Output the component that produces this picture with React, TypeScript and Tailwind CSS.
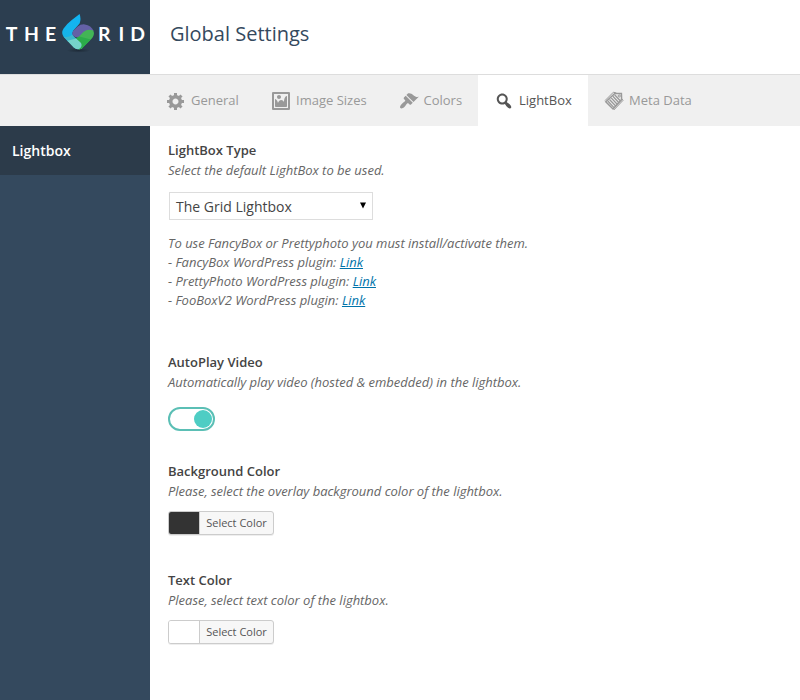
import type { ReactNode } from "react";

const paths = {
  general:
    "M18 12h-2.18c-.17.7-.44 1.35-.81 1.93l1.54 1.54-2.1 2.1-1.54-1.54c-.58.36-1.23.63-1.91.79V19H8v-2.18c-.68-.16-1.33-.43-1.91-.79l-1.54 1.54-2.12-2.12 1.54-1.54c-.36-.58-.63-1.23-.79-1.91H1V9.03h2.17c.16-.7.44-1.35.8-1.94L2.43 5.55l2.1-2.1 1.54 1.54c.58-.37 1.24-.64 1.93-.81V2h3v2.18c.68.16 1.33.43 1.91.79l1.54-1.54 2.12 2.12-1.54 1.54c.36.59.64 1.24.8 1.94H18V12zm-8.5 1.5c1.66 0 3-1.34 3-3s-1.34-3-3-3-3 1.34-3 3 1.34 3 3 3z",
  image:
    "M2.25 1h15.5c.69 0 1.25.56 1.25 1.25v15.5c0 .69-.56 1.25-1.25 1.25H2.25C1.56 19 1 18.44 1 17.75V2.25C1 1.56 1.56 1 2.25 1zM17 17V3H3v14h14zM10 6c0-1.1-.9-2-2-2s-2 .9-2 2 .9 2 2 2 2-.9 2-2zm3 5s0-6 3-6v10c0 .55-.45 1-1 1H5c-.55 0-1-.45-1-1V8c2 0 3 4 3 4s1-3 3-3 3 2 3 2z",
  colors:
    "M14.48 11.06L7.41 3.99l1.5-1.5c.5-.56 2.3-.47 3.51.32 1.21.8 1.43 1.28 2.91 2.1 1.18.64 2.45 1.26 4.45.85zm-.71.71L6.7 4.7 4.93 6.47c-.39.39-.39 1.02 0 1.41l1.06 1.06c.39.39.39 1.03 0 1.42-.6.6-1.43 1.11-2.21 1.69-.35.26-.7.53-1.01.84C1.43 14.23.4 16.08 1.4 17.07c.99 1 2.84-.03 4.18-1.36.31-.31.58-.66.85-1.02.57-.78 1.08-1.61 1.69-2.21.39-.39 1.02-.39 1.41 0l1.06 1.06c.39.39 1.02.39 1.41 0z",
  search:
    "M12.14 4.18c1.87 1.87 2.11 4.75.72 6.89.12.1.22.21.36.31.2.16.47.36.81.59.34.24.56.39.66.47.42.31.73.57.94.78.32.32.6.65.84 1 .25.35.44.69.59 1.04.14.35.21.68.18 1-.02.32-.14.59-.36.81s-.49.34-.81.36c-.31.02-.65-.04-.99-.19-.35-.14-.7-.34-1.04-.59-.35-.24-.68-.52-1-.84-.21-.21-.47-.52-.77-.93-.1-.13-.25-.35-.47-.66-.22-.32-.4-.57-.56-.78-.16-.2-.29-.35-.44-.5-2.07 1.09-4.69.76-6.44-.98-2.14-2.15-2.14-5.64 0-7.78 2.15-2.15 5.63-2.15 7.78 0zm-1.41 6.36c1.36-1.37 1.36-3.58 0-4.95-1.37-1.37-3.59-1.37-4.95 0-1.37 1.37-1.37 3.58 0 4.95 1.36 1.37 3.58 1.37 4.95 0z",
};

function Icon({ d }: { d: string }) {
  return (
    <svg className="size-5 shrink-0" viewBox="0 0 20 20" fill="currentColor">
      <path d={d} />
    </svg>
  );
}

function NotesIcon() {
  return (
    <svg className="size-5 shrink-0" viewBox="0 0 20 20" fill="none" stroke="currentColor">
      <path d="M1 9.6 9.4 1.2 12.4 2" strokeWidth="1" />
      <path d="M1.8 10.8 10.8 2.4 17.4 2.6 17.6 8.6 9 18Z" strokeWidth="1.5" />
      <path d="M9.8 19 19 9.4 18 8" strokeWidth="1" />
      <path d="M3.8 10l6.2 6.6M5.5 8.5l6.2 6.5M7.2 6.9l6 6.4M8.9 5.3l6 6.4M10.6 3.8l5.6 6" strokeWidth="1.3" />
      <circle cx="15.2" cy="5" r="1.1" strokeWidth="1" />
    </svg>
  );
}

function Logo() {
  return (
    <svg className="block h-[74px] w-[150px]" viewBox="0 0 150 74">
      <defs>
        <linearGradient id="sky" x1="0" y1="0" x2="0" y2="1">
          <stop offset="0" stopColor="#10b4f5" />
          <stop offset="1" stopColor="#18b5e6" />
        </linearGradient>
        <radialGradient id="shade">
          <stop offset="0" stopColor="#17222d" stopOpacity=".7" />
          <stop offset="1" stopColor="#17222d" stopOpacity="0" />
        </radialGradient>
      </defs>
      <ellipse cx="78.5" cy="50.5" rx="12" ry="2.2" fill="url(#shade)" />
      <path d="M79.6 14Q81.4 19 79.6 23.4L73.6 30.2Q71.2 33.6 73.8 36.4L68 41.4 64 37.2Q60.6 33.2 63.6 28.6Q66.5 24.2 71.5 20.3Z" fill="url(#sky)" />
      <path d="M63.2 36.2Q67.2 38.6 72.6 34.6L73.8 36.4 82.6 43.6 80 48.6Q77 50.2 73.8 47.4Z" fill="#3db9cd" />
      <path d="M67.4 40.8 76.4 38.4 82.8 43.4 82.2 48.2Q78.2 50.8 73.8 47.4Z" fill="#76d3cb" />
      <path d="M72.8 35.2Q71.4 32.8 74 30L77.4 26.8Q80.6 24 84.8 24.4Q91.2 25.2 93.6 31L86 33.8 80 37.2Q75.6 38.4 72.8 35.2Z" fill="#6461a6" />
      <path d="M78.8 36.8 83.4 32Q88 28.2 93.3 30.6Q95 34.6 91.8 38.6L82.6 47.8Q80.8 49.6 78.6 49.5Q83.2 46.8 81.2 43L76.2 38.3Z" fill="#43b556" />
      <path d="M79.4 36.4 90.8 39.6 82.6 47.8Q80.8 49.6 78.6 49.5Q83.2 46.8 81.2 43L76.2 38.3Z" fill="#2bad4a" />
      <text x="5.8 24.1 45 98.1 118.5 130.3" y="41" fill="#fff" fontSize="19.4" className="font-['Lato'] font-bold">
        THERID
      </text>
    </svg>
  );
}

function Tab({ width, active, icon, children }: { width: string; active?: boolean; icon: ReactNode; children: ReactNode }) {
  return (
    <div className={`flex ${width} shrink-0 items-center gap-[5px] pl-4 ${active ? "bg-white text-[#555]" : "text-[#999]"}`}>
      {icon}
      <span className="whitespace-nowrap">{children}</span>
    </div>
  );
}

function Heading({ title, text }: { title: string; text: string }) {
  return (
    <>
      <h2 className="h-5 font-semibold leading-5 text-[#444]">{title}</h2>
      <p className="h-5 italic leading-5 tracking-[-0.016px]">{text}</p>
    </>
  );
}

function Plugin({ name }: { name: string }) {
  return (
    <p>
      - {name} WordPress plugin: <a className="text-[#0073aa] underline" href="#">Link</a>
    </p>
  );
}

function ColorButton({ swatch }: { swatch: string }) {
  return (
    <button className="flex h-6 w-[106px] overflow-hidden rounded-[3px] border border-[#ccc] bg-[#f7f7f7] shadow-[0_1px_0_#eee]">
      <span className={`h-full w-[30px] ${swatch}`} />
      <span className="h-full flex-1 border-l border-[#ccc] text-center text-[11px] leading-[22px] text-[#555]">Select Color</span>
    </button>
  );
}

export default function App() {
  return (
    <div className="flex h-[700px] w-[800px] flex-col overflow-hidden bg-white font-['Open_Sans',sans-serif] text-[13px] text-[#666]">
      <header className="flex h-[74px] shrink-0">
        <div className="w-[150px] bg-[#2c3e50]"><Logo /></div>
        <h1 className="pl-5 text-[20px] leading-[68px] text-[#34495e]">Global Settings</h1>
      </header>
      <nav className="flex h-[52px] shrink-0 border-t border-[#ddd] bg-[#f0f0f0] pl-[150px]">
        <Tab width="w-[105px]" icon={<Icon d={paths.general} />}>General</Tab>
        <Tab width="w-[127.5px]" icon={<Icon d={paths.image} />}>Image Sizes</Tab>
        <Tab width="w-[95.5px]" icon={<Icon d={paths.colors} />}>Colors</Tab>
        <Tab width="w-[110px]" active icon={<Icon d={paths.search} />}>LightBox</Tab>
        <Tab width="w-[120px]" icon={<NotesIcon />}>Meta Data</Tab>
      </nav>
      <div className="flex min-h-0 flex-1">
        <aside className="w-[150px] bg-[#34495e]">
          <div className="h-[49px] bg-[#2c3b4a] pl-3 text-[14px] font-semibold leading-[49px] text-white">Lightbox</div>
        </aside>
        <main className="flex-1 pl-[18px] pt-[14px]">
          <section className="h-[212px]">
            <Heading title="LightBox Type" text="Select the default LightBox to be used." />
            <div className="ml-px mt-3 flex h-7 w-[204px] items-center justify-between border border-[#ddd] pl-1.5 pr-1.5 text-[#444]">
              <span className="text-[14px]">The Grid Lightbox</span>
              <svg className="-mt-px h-[7px] w-[6px]" viewBox="0 0 6 7"><path d="M0 0.5h6L3 6.5z" fill="#000" /></svg>
            </div>
            <div className="mt-3.5 italic leading-[19px] tracking-[-0.016px]">
              <p>To use FancyBox or Prettyphoto you must install/activate them.</p>
              <Plugin name="FancyBox" />
              <Plugin name="PrettyPhoto" />
              <Plugin name="FooBoxV2" />
            </div>
          </section>
          <section className="h-[109px]">
            <Heading title="AutoPlay Video" text="Automatically play video (hosted & embedded) in the lightbox." />
            <div className="mt-[15px] flex h-6 w-[47px] items-center justify-end rounded-full border-2 border-[#5bbfb5] pr-px">
              <span className="size-[18px] rounded-full bg-[#4ecdc4]" />
            </div>
          </section>
          <section className="h-[109px]">
            <Heading title="Background Color" text="Please, select the overlay background color of the lightbox." />
            <div className="mt-2.5"><ColorButton swatch="bg-[#333]" /></div>
          </section>
          <section>
            <Heading title="Text Color" text="Please, select text color of the lightbox." />
            <div className="mt-2.5"><ColorButton swatch="bg-white" /></div>
          </section>
        </main>
      </div>
    </div>
  );
}
